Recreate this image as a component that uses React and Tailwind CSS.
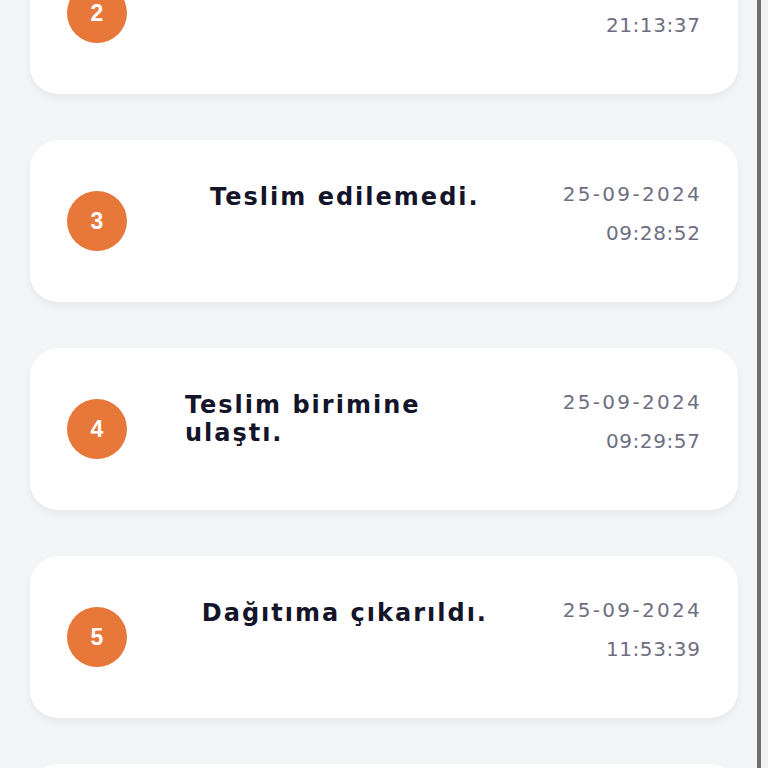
import React from "react";

const items = [
  { n: 2, title: "Kabul edildi.", date: "24-09-2024", time: "21:13:37" },
  { n: 3, title: "Teslim edilemedi.", date: "25-09-2024", time: "09:28:52" },
  { n: 4, title: "Teslim birimine ulaştı.", date: "25-09-2024", time: "09:29:57" },
  { n: 5, title: "Dağıtıma çıkarıldı.", date: "25-09-2024", time: "11:53:39" },
  { n: 6, title: "Teslim edildi.", date: "25-09-2024", time: "14:02:11" },
];

function Card({ n, title, date, time }) {
  return (
    <div className="flex h-[162px] shrink-0 items-center rounded-[28px] bg-white pl-[37px] pr-[38px] shadow-[0_4px_10px_rgba(0,0,0,0.06)]">
      <div className="flex h-[60px] w-[60px] shrink-0 items-center justify-center rounded-full bg-[#e8773a] font-['Liberation_Sans',sans-serif] text-[23px] font-bold text-white">
        {n}
      </div>
      <div className="flex flex-1 justify-center self-start pt-[43px]">
        <div className="max-w-[320px] font-['DejaVu_Sans',sans-serif] text-[24px] font-bold leading-[28px] tracking-[2px] text-[#14142a]">
          {title}
        </div>
      </div>
      <div className="-mr-[2px] flex flex-col items-end self-start pt-[35px] font-['DejaVu_Sans',sans-serif] text-[20px] leading-[39px] text-[#6e6e82]">
        <span className="tracking-[2.3px]">{date}</span>
        <span className="mr-[1.5px] tracking-[0.6px]">{time}</span>
      </div>
    </div>
  );
}

export default function App() {
  return (
    <div className="flex h-[768px] w-[768px] overflow-hidden bg-[#f4f5f7]">
      <div className="flex-1 pl-[30px] pr-[19px]">
        <div className="mt-[-68px] flex flex-col gap-[46px]">
          {items.map((it) => (
            <Card key={it.n} {...it} />
          ))}
        </div>
      </div>
      <div className="flex w-[11px] shrink-0 bg-[#f1f1f1]">
        <div className="h-full w-[4px] bg-[#6f6f6f]" />
      </div>
    </div>
  );
}
